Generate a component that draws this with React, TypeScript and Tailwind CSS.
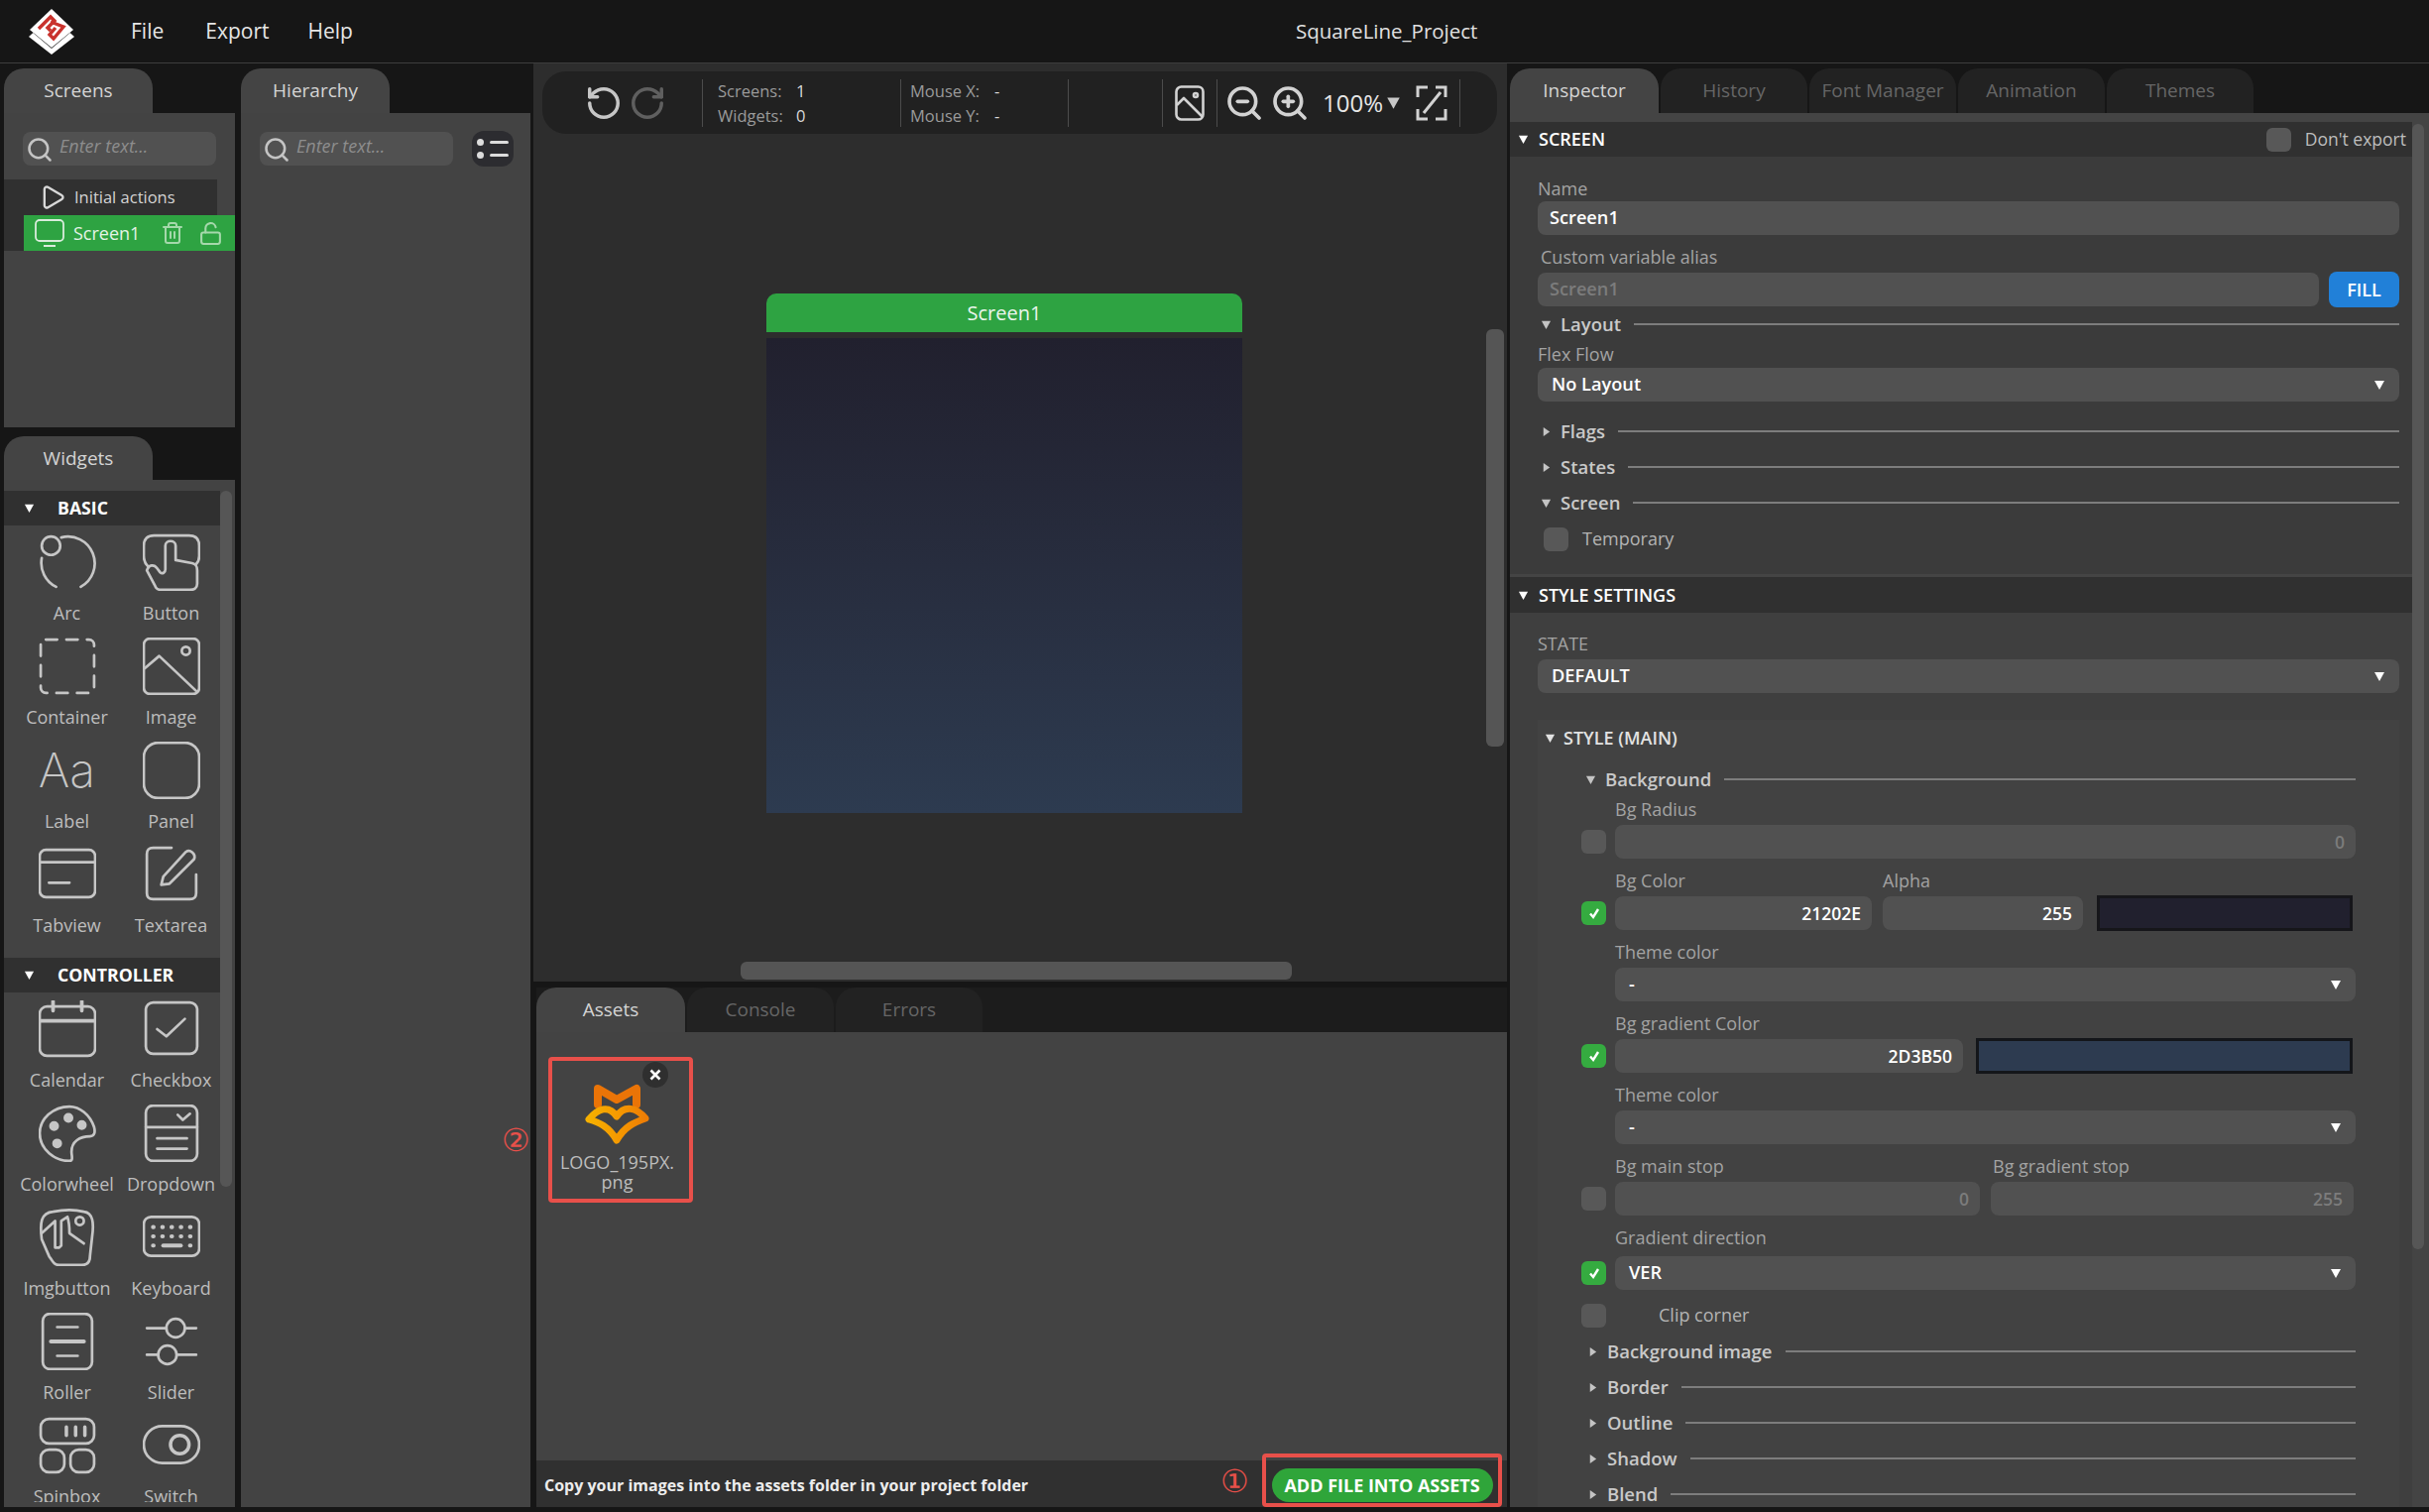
import type { ReactNode } from "react";
import { LockOpen, Play, RotateCcw, RotateCw, Search, Trash2, ZoomIn, ZoomOut } from "lucide-react";

const Caret = ({ right = false, className = "" }: { right?: boolean; className?: string }) => (
  <svg viewBox="0 0 12 12" className={`shrink-0 ${className}`} fill="currentColor">
    {right ? <path d="M3 1 L10 6 L3 11 Z" /> : <path d="M1 2 H11 L6 11 Z" />}
  </svg>
);

const Tab = ({ label, active = false }: { label: string; active?: boolean }) => (
  <div
    className={`flex h-full items-center justify-center rounded-t-[20px] text-[19px] ${
      active ? "w-[150px] bg-[#444444] text-[#d4d4d4]" : "w-[148px] bg-[#222222] text-[#666666]"
    }`}
  >
    {label}
  </div>
);

const SearchBox = () => (
  <div className="relative flex h-[34px] w-[195px] items-center rounded-lg bg-[#515151] pb-[6px] pl-[37px] text-[18px] italic text-[#8d8d8d]">
    <Search className="absolute left-[3px] top-[4px] size-[28px] text-[#c4c4c4]" strokeWidth={2.2} />
    Enter text...
  </div>
);

const Ico = ({ children }: { children: ReactNode }) => (
  <svg viewBox="0 0 56 56" className="size-[58px]" fill="none" stroke="#c6c6c6" strokeWidth="2.6" strokeLinecap="round" strokeLinejoin="round">
    {children}
  </svg>
);

const widgetsBasic: [string, ReactNode][] = [
  ["Arc", <Ico><circle cx="12" cy="12" r="9" /><path d="M22 4 A26 26 0 0 1 41 52 M3 24 A26 26 0 0 0 17 52" /></Ico>],
  ["Button", <Ico><path d="M5 32 C2 29 1 26 1 22 V12 C1 5 5 2 11 2 H45 C51 2 55 5 55 12 V22 C55 26 54 28 52 30" /><path d="M4 36 C6 30 11 30 14 34 L17 38 C19 40 22 38 22 35 V12 C22 6 32 6 32 12 V26 L48 29 C52 30 53 32 53 36 V49 C53 53 50 55 46 55 H18 C15 55 13 54 12 51 Z" /></Ico>],
  ["Container", <Ico><rect x="2" y="2" width="52" height="52" rx="5" strokeDasharray="11 9" /></Ico>],
  ["Image", <Ico><rect x="1" y="1" width="54" height="54" rx="6" /><circle cx="42" cy="13" r="4" /><path d="M2 30 L16 18 L52 52" /></Ico>],
  ["Label", <span className="flex h-[58px] items-center font-['Inter'] text-[48px] font-extralight leading-none text-[#c6c6c6]">Aa</span>],
  ["Panel", <Ico><rect x="1" y="1" width="54" height="54" rx="14" /></Ico>],
  ["Tabview", <Ico><rect x="1" y="4" width="54" height="46" rx="6" /><path d="M1 16 H55 M10 36 H30" /></Ico>],
  ["Textarea", <Ico><path d="M28 2 H10 C6 2 4 4 4 8 V46 C4 50 6 52 10 52 H46 C50 52 52 50 52 46 V28" /><path d="M18 38 L20 30 L42 6 C46 3 52 8 50 13 L26 37 Z" /></Ico>],
];

const widgetsController: [string, ReactNode][] = [
  ["Calendar", <Ico><rect x="1" y="6" width="54" height="48" rx="7" /><path d="M1 20 H55 M14 1 V10 M42 1 V10" strokeWidth="3.6" /></Ico>],
  ["Checkbox", <Ico><rect x="3" y="2" width="50" height="50" rx="7" /><path d="M14 28 L23 35 L41 18" /></Ico>],
  ["Colorwheel", <Ico><path d="M30 2 C14 2 1 14 1 28 C1 44 16 55 30 55 C34 55 32 50 32 46 C32 36 40 31 50 31 C55 31 55 26 54 22 C50 10 40 2 30 2 Z" /><circle cx="29" cy="13" r="3.5" fill="#c6c6c6" /><circle cx="15" cy="21" r="3.5" fill="#c6c6c6" /><circle cx="42" cy="20" r="3.5" fill="#c6c6c6" /><circle cx="18" cy="38" r="3.5" fill="#c6c6c6" /></Ico>],
  ["Dropdown", <Ico><rect x="3" y="1" width="50" height="54" rx="7" /><path d="M3 22 H53 M14 33 H43 M14 43 H43 M34 10 L39 15 L46 9" /></Ico>],
  ["Imgbutton", <Ico><path d="M3 30 C1 14 2 4 14 3 C24 1 36 1 44 3 C53 4 54 14 52 28 L50 46 C50 52 47 55 42 55 H20 C15 55 14 52 10 46 Z" /><path d="M3 24 L16 12 L16 38 L20 38 L22 36 V12 L28 8 C30 14 30 20 30 24 L44 34" /><circle cx="40" cy="12" r="4" /></Ico>],
  ["Keyboard", <Ico><rect x="1" y="8" width="54" height="38" rx="7" /><path d="M10 18 H10.5 M19 18 H19.5 M28 18 H28.5 M37 18 H37.5 M46 18 H46.5 M10 27 H10.5 M19 27 H19.5 M28 27 H28.5 M37 27 H37.5 M46 27 H46.5 M10 36 H10.5 M46 36 H46.5" strokeWidth="4" /><path d="M20 36 H37" strokeWidth="4" /></Ico>],
  ["Roller", <Ico><rect x="4" y="1" width="48" height="54" rx="7" /><path d="M18 14 H38 M18 42 H38" /><path d="M12 28 H44" strokeWidth="4" /></Ico>],
  ["Slider", <Ico><circle cx="32" cy="15" r="9" /><circle cx="24" cy="41" r="9" /><path d="M4 15 H23 M41 15 H52 M4 41 H15 M33 41 H52" /></Ico>],
  ["Spinbox", <Ico><rect x="2" y="2" width="52" height="24" rx="8" /><rect x="2" y="32" width="23" height="22" rx="8" /><rect x="31" y="32" width="23" height="22" rx="8" /><path d="M27 10 V18 M36 10 V18 M45 10 V18" strokeWidth="3.4" /></Ico>],
  ["Switch", <Ico><rect x="1" y="9" width="54" height="36" rx="18" /><circle cx="36" cy="27" r="9" strokeWidth="3.4" /></Ico>],
];

const WidgetGrid = ({ items }: { items: [string, ReactNode][] }) => (
  <div className="grid w-[218px] grid-cols-[105px_105px] pl-[11px] pt-[5px]">
    {items.map(([name, icon]) => (
      <div key={name} className="flex h-[105px] flex-col items-center justify-start pt-[3px] text-[18px] leading-[24px] text-[#bdbdbd]">
        {icon}
        <span className="mt-[10px] whitespace-nowrap">{name}</span>
      </div>
    ))}
  </div>
);

const GroupHead = ({ title, className = "" }: { title: string; className?: string }) => (
  <div className={`flex h-[35px] w-[218px] items-center bg-[#303030] pl-[20px] text-[17.7px] font-bold text-white ${className}`}>
    <Caret className="size-[11px]" />
    <span className="ml-[23px]">{title}</span>
  </div>
);

const Sep = ({ w, children }: { w: string; children?: ReactNode }) => (
  <div className={`flex h-[48px] shrink-0 items-center border-r border-[#4c4c4c] ${w}`}>{children}</div>
);

const Stat = ({ k, v, vx }: { k: string; v: string; vx: string }) => (
  <div className="flex h-[25px] items-center text-[16.5px] text-[#9a9a9a]">
    <span className={vx}>{k}</span>
    <span className="text-[#d8d8d8]">{v}</span>
  </div>
);

const Label = ({ text, className = "" }: { text: string; className?: string }) => (
  <div className={`h-[22px] whitespace-nowrap text-[18px] leading-[22px] text-[#a3a3a3] ${className}`}>{text}</div>
);

const Field = ({ value = "", muted = false, right = false, className = "" }: { value?: string; muted?: boolean; right?: boolean; className?: string }) => (
  <div
    className={`flex h-[34px] items-center rounded-lg bg-[#515151] font-semibold ${
      right ? "justify-end pl-[12px] pr-[11px] text-[17.5px]" : "px-[12px] text-[18.2px]"
    } ${muted ? "text-[#7c7c7c]" : "text-white"} ${className}`}
  >
    {value}
  </div>
);

const SelectBox = ({ value, className = "" }: { value: string; className?: string }) => (
  <div className={`flex h-[34px] items-center justify-between rounded-lg bg-[#515151] pl-[14px] pr-[14px] text-[18.2px] font-semibold text-white ${className}`}>
    {value}
    <Caret className="size-[12px]" />
  </div>
);

const Heading = ({ title, open = false, className = "" }: { title: string; open?: boolean; className?: string }) => (
  <div className={`flex h-[22px] items-center text-[18.5px] font-semibold text-[#c9c9c9] ${className}`}>
    <Caret right={!open} className="size-[11px] text-[#c4c4c4]" />
    <span className="ml-[9px] mr-[13px] whitespace-nowrap">{title}</span>
    <div className="h-[2px] flex-1 bg-[#7d7d7d]" />
  </div>
);

const Check = ({ on = false }: { on?: boolean }) => (
  <div className={`flex h-[24px] w-[25px] shrink-0 items-center justify-center rounded-md ${on ? "bg-[#35ab40]" : "bg-[#585858]"}`}>
    {on && (
      <svg viewBox="0 0 16 16" className="size-[16px]" fill="none" stroke="white" strokeWidth="2.4">
        <path d="M4 8.5 L7 12 L12 4" />
      </svg>
    )}
  </div>
);

const SectionBar = ({ title, children, className = "" }: { title: string; children?: ReactNode; className?: string }) => (
  <div className={`mr-[17px] flex shrink-0 items-center bg-[#303030] pl-[8px] pr-[6px] text-[18px] font-semibold text-white ${className}`}>
    <Caret className="size-[11px]" />
    <span className="ml-[10px]">{title}</span>
    {children}
  </div>
);

const FoxLogo = () => (
  <svg viewBox="0 0 65 62" className="h-[62px] w-[65px] shrink-0" fill="none" strokeLinecap="round" strokeLinejoin="round">
    <defs>
      <linearGradient id="fox" x1="0" y1="0" x2="1" y2="0">
        <stop offset="0" stopColor="#f6b000" />
        <stop offset="0.5" stopColor="#f59a00" />
        <stop offset="1" stopColor="#ee7d05" />
      </linearGradient>
    </defs>
    <path d="M13 21 V5 L32 16 L52 5 V21" stroke="#ea7407" strokeWidth="8" />
    <path d="M32 33 C24 21 13 25 4 36 C14 39 24 43 32 57 C40 43 50 39 61 35 C52 24 40 21 32 33 Z" stroke="url(#fox)" strokeWidth="7" />
  </svg>
);

const AppLogo = () => (
  <svg viewBox="0 0 48 48" className="size-[48px]">
    <path d="M24 8 L47 29 L24 47 L1 29 Z" fill="white" />
    <path d="M24 5 L44 24 L24 41 L4 24 Z" fill="#2a2a2a" />
    <path d="M24 1 L46 22 L24 40 L2 22 Z" fill="white" />
    <path d="M11 21 L23 9 L27 13 L20 20 L23 23 M23 14 L36 19 L26 31 L22 27 L28 20" fill="none" stroke="#c9322d" strokeWidth="3.4" />
  </svg>
);

const App = () => {
  return (
    <div className="flex h-[1525px] w-[2450px] flex-col overflow-hidden bg-[#161616] font-['Open_Sans','Noto_Sans',sans-serif]">
      <header className="relative flex h-[64px] shrink-0 items-center border-b border-[#3d3d3d] bg-[#161616] text-[21px] text-[#e6e6e6]">
        <div className="ml-[28px] w-[104px]">
          <AppLogo />
        </div>
        <span>File</span>
        <span className="ml-[42px]">Export</span>
        <span className="ml-[39px]">Help</span>
        <span className="absolute left-[1307px] top-[16px] text-[20.5px] text-[#e0e0e0]">SquareLine_Project</span>
      </header>

      <div className="flex min-h-0 flex-1 pb-[5px]">
        {/* left column */}
        <div className="ml-[4px] flex w-[233px] shrink-0 flex-col pt-[5px]">
          <div className="h-[45px]">
            <Tab label="Screens" active />
          </div>
          <div className="h-[317px] bg-[#434343] pt-[19px]">
            <div className="ml-[19px]">
              <SearchBox />
            </div>
            <div className="mt-[14px] flex h-[36px] w-[215px] items-center bg-[#303030] pl-[35px] text-[16.5px] text-[#d4d4d4]">
              <Play className="size-[28px] text-[#d8d8d8]" strokeWidth={2} />
              <span className="ml-[8px]">Initial actions</span>
            </div>
            <div className="flex h-[36px]">
              <div className="w-[20px] bg-[#303030]" />
              <div className="flex flex-1 items-center bg-[#2ea342] pl-[11px] text-[18px] text-[#e4f3e6]">
                <svg viewBox="0 0 30 30" className="size-[30px]" fill="none" stroke="#d9ecdc" strokeWidth="1.8">
                  <rect x="1" y="2" width="28" height="21" rx="4" />
                  <path d="M9 28 H21" strokeWidth="2" />
                </svg>
                <span className="ml-[9px]">Screen1</span>
                <Trash2 className="ml-[21px] size-[24px] text-[#a5d8ab]" strokeWidth={2} />
                <LockOpen className="ml-[14px] size-[25px] text-[#a5d8ab]" strokeWidth={2} />
              </div>
            </div>
          </div>
          <div className="mt-[9px] h-[44px]">
            <Tab label="Widgets" active />
          </div>
          <div className="relative min-h-0 flex-1 overflow-hidden bg-[#434343] pt-[11px]">
            <div className="h-[1020px] overflow-hidden">
              <GroupHead title="BASIC" />
              <WidgetGrid items={widgetsBasic} />
              <GroupHead title="CONTROLLER" className="mt-[11px]" />
              <WidgetGrid items={widgetsController} />
            </div>
            <div className="absolute left-[218px] top-[11px] h-[702px] w-[12px] rounded-md bg-[#565656]" />
          </div>
        </div>

        {/* hierarchy */}
        <div className="ml-[6px] flex w-[292px] shrink-0 flex-col pt-[5px]">
          <div className="h-[45px]">
            <Tab label="Hierarchy" active />
          </div>
          <div className="flex flex-1 items-start bg-[#434343] pl-[19px] pt-[19px]">
            <SearchBox />
            <div className="ml-[19px] mt-[-1px] flex h-[36px] w-[42px] flex-col items-center justify-center gap-[6px] rounded-xl bg-[#2c2c30]">
              <div className="flex items-center gap-[6px]">
                <span className="size-[7px] rounded-full bg-[#dcdcdc]" />
                <span className="h-[3px] w-[19px] rounded bg-[#dcdcdc]" />
              </div>
              <div className="flex items-center gap-[6px]">
                <span className="size-[7px] rounded-full bg-[#dcdcdc]" />
                <span className="h-[3px] w-[19px] rounded bg-[#dcdcdc]" />
              </div>
            </div>
          </div>
        </div>

        {/* center */}
        <div className="relative ml-[3px] flex w-[982px] shrink-0 flex-col">
          <div className="relative h-[926px] bg-[#2d2d2d] pl-[9px] pr-[10px] pt-[8px]">
            <div className="flex h-[63px] items-center rounded-[24px] bg-[#212121] text-[#c8c8c8]">
              <Sep w="w-[162px] pl-[43px] gap-[6px]">
                <RotateCcw className="size-[38px] text-[#c6c6c6]" strokeWidth={2.2} />
                <RotateCw className="size-[38px] text-[#5f5f5f]" strokeWidth={2.2} />
              </Sep>
              <Sep w="w-[200px] pl-[15px]">
                <div className="mt-[3px] flex flex-col">
                  <Stat k="Screens:" v="1" vx="w-[79px]" />
                  <Stat k="Widgets:" v="0" vx="w-[79px]" />
                </div>
              </Sep>
              <Sep w="w-[169px] pl-[9px]">
                <div className="mt-[3px] flex flex-col">
                  <Stat k="Mouse X:" v="-" vx="w-[85px]" />
                  <Stat k="Mouse Y:" v="-" vx="w-[85px]" />
                </div>
              </Sep>
              <Sep w="w-[95px]" />
              <Sep w="w-[55px] pl-[12px]">
                <svg viewBox="0 0 30 36" className="h-[36px] w-[30px]" fill="none" stroke="#d2d2d2" strokeWidth="2.6" strokeLinejoin="round">
                  <rect x="1.5" y="1.5" width="27" height="33" rx="5" />
                  <circle cx="21" cy="10" r="2" />
                  <path d="M2 20 L9 13 L28 32" />
                </svg>
              </Sep>
              <Sep w="w-[245px] pl-[7px]">
                <ZoomOut className="size-[40px] text-[#d2d2d2]" strokeWidth={2.2} />
                <ZoomIn className="ml-[6px] size-[40px] text-[#d2d2d2]" strokeWidth={2.2} />
                <span className="ml-[13px] text-[24px] text-[#e6e6e6]">100%</span>
                <Caret className="ml-[3px] size-[15px] text-[#c8c8c8]" />
                <svg viewBox="0 0 32 36" className="ml-[15px] h-[36px] w-[32px]" fill="none" stroke="#d2d2d2" strokeWidth="3">
                  <path d="M12 2 H2 V12 M20 34 H30 V24 M2 24 V34 H12 M20 2 H30 V12 M8 28 L25 7" />
                </svg>
              </Sep>
            </div>
            <div className="ml-[226px] mt-[161px] w-[480px]">
              <div className="flex h-[39px] items-center justify-center rounded-t-[10px] bg-[#2ea342] text-[20px] text-[#eaf6ec]">Screen1</div>
              <div className="mt-[6px] h-[479px] bg-gradient-to-b from-[#21202e] to-[#2d3b50]" />
            </div>
            <div className="absolute left-[961px] top-[268px] h-[421px] w-[18px] rounded-md bg-[#555555]" />
            <div className="absolute bottom-[2px] left-[209px] h-[18px] w-[556px] rounded-md bg-[#555555]" />
          </div>

          <div className="ml-[3px] mt-[6px] flex h-[45px] shrink-0 gap-[2px] bg-[#1c1c1c]">
            <Tab label="Assets" active />
            <Tab label="Console" />
            <Tab label="Errors" />
          </div>
          <div className="ml-[3px] min-h-0 flex-1 bg-[#434343] pl-[12px] pt-[25px]">
            <div className="relative flex h-[147px] w-[146px] flex-col items-center rounded-[4px] border-[4px] border-[#e8504a] pr-[7px] pt-[23px] text-center text-[18px] leading-[20px] text-[#bdbdbd]">
              <FoxLogo />
              <span className="mt-[7px] w-[130px] shrink-0 text-center">LOGO_195PX.</span>
              <span className="shrink-0">png</span>
              <div className="absolute left-[91px] top-[1px] flex size-[26px] items-center justify-center rounded-full bg-[#2f2f2f]">
                <svg viewBox="0 0 12 12" className="size-[12px]" stroke="white" strokeWidth="2.6">
                  <path d="M1.5 1.5 L10.5 10.5 M10.5 1.5 L1.5 10.5" />
                </svg>
              </div>
            </div>
          </div>
          <div className="ml-[3px] flex h-[47px] shrink-0 items-center bg-[#303030] pl-[8px] pt-[2px] text-[16px] font-bold text-[#ececec]">
            Copy your images into the assets folder in your project folder
          </div>
          <span className="absolute left-[-32px] top-[1069px] text-[32px] leading-[32px] text-[#e8504a]">②</span>
          <span className="absolute left-[693px] top-[1413px] text-[32px] leading-[32px] text-[#e8504a]">①</span>
          <div className="absolute left-[735px] top-[1402px] flex h-[54px] w-[242px] items-end justify-center rounded-[4px] border-[4px] border-[#e8504a] pb-[1px]">
            <div className="flex h-[34px] w-[223px] items-center justify-center rounded-full bg-[#2fa53a] text-[18px] font-bold text-white">ADD FILE INTO ASSETS</div>
          </div>
        </div>

        {/* inspector */}
        <div className="relative ml-[3px] flex min-w-0 flex-1 flex-col pt-[5px]">
          <div className="flex h-[45px] shrink-0 gap-[2px] bg-[#161616]">
            <Tab label="Inspector" active />
            <Tab label="History" />
            <Tab label="Font Manager" />
            <Tab label="Animation" />
            <Tab label="Themes" />
          </div>
          <div className="flex min-h-0 flex-1 flex-col overflow-hidden bg-[#444444] pt-[9px]">
            <SectionBar title="SCREEN" className="h-[35px]">
              <div className="ml-auto flex items-center text-[17.5px] font-normal text-[#bdbdbd]">
                <Check />
                <span className="ml-[14px]">Don't export</span>
              </div>
            </SectionBar>
            <div className="mr-[17px] h-[421px] shrink-0 bg-[#3b3b3b] pl-[28px]">
              <div className="w-[869px]">
                <Label text="Name" className="mt-[21px]" />
                <Field value="Screen1" className="mt-[2px]" />
                <Label text="Custom variable alias" className="ml-[3px] mt-[11px]" />
                <div className="mt-[5px] flex gap-[10px]">
                  <Field value="Screen1" muted className="flex-1" />
                  <div className="mt-[-1px] flex h-[36px] w-[71px] items-center justify-center rounded-lg bg-[#2180d8] text-[18px] font-semibold text-white">FILL</div>
                </div>
                <Heading title="Layout" open className="ml-[3px] mt-[6px]" />
                <Label text="Flex Flow" className="mt-[8px]" />
                <SelectBox value="No Layout" className="mt-[3px]" />
                <Heading title="Flags" className="ml-[3px] mt-[19px]" />
                <Heading title="States" className="ml-[3px] mt-[14px]" />
                <Heading title="Screen" open className="ml-[3px] mt-[14px]" />
                <div className="ml-[6px] mt-[12px] flex items-center">
                  <Check />
                  <span className="ml-[14px] text-[18px] text-[#b4b4b4]">Temporary</span>
                </div>
              </div>
            </div>
            <SectionBar title="STYLE SETTINGS" className="mt-[3px] h-[36px]" />
            <div className="mr-[17px] min-h-0 flex-1 bg-[#3f3f3f] pl-[28px]">
              <div className="w-[869px]">
                <Label text="STATE" className="mt-[20px]" />
                <SelectBox value="DEFAULT" className="mt-[5px]" />
                <div className="mt-[27px] h-[800px] bg-[#424242] pt-[7px]">
                  <div className="flex h-[22px] items-center pl-[7px] text-[18px] font-semibold text-[#e2e2e2]">
                    <Caret className="size-[11px]" />
                    <span className="ml-[8px]">STYLE (MAIN)</span>
                  </div>
                  <div className="ml-[44px] mr-[44px]">
                    <Heading title="Background" open className="ml-[4px] mt-[20px]" />
                    <Label text="Bg Radius" className="ml-[34px] mt-[8px]" />
                    <div className="mt-[5px] flex items-center gap-[9px]">
                      <Check />
                      <Field value="0" muted right className="flex-1" />
                    </div>
                    <div className="ml-[34px] mt-[11px] flex">
                      <Label text="Bg Color" className="w-[270px]" />
                      <Label text="Alpha" />
                    </div>
                    <div className="mt-[5px] flex items-center gap-[9px]">
                      <Check on />
                      <Field value="21202E" right className="w-[259px]" />
                      <Field value="255" right className="ml-[2px] w-[202px]" />
                      <div className="my-[-1px] ml-[5px] h-[36px] w-[258px] border-[3px] border-[#16161a] bg-[#21202e]" />
                    </div>
                    <Label text="Theme color" className="ml-[34px] mt-[11px]" />
                    <div className="ml-[34px] mt-[5px]">
                      <SelectBox value="-" />
                    </div>
                    <Label text="Bg gradient Color" className="ml-[34px] mt-[11px]" />
                    <div className="mt-[5px] flex items-center gap-[9px]">
                      <Check on />
                      <Field value="2D3B50" right className="w-[351px]" />
                      <div className="my-[-1px] ml-[4px] h-[36px] w-[380px] border-[3px] border-[#14161a] bg-[#2d3b50]" />
                    </div>
                    <Label text="Theme color" className="ml-[34px] mt-[11px]" />
                    <div className="ml-[34px] mt-[5px]">
                      <SelectBox value="-" />
                    </div>
                    <div className="ml-[34px] mt-[11px] flex">
                      <Label text="Bg main stop" className="w-[381px]" />
                      <Label text="Bg gradient stop" />
                    </div>
                    <div className="mt-[5px] flex items-center gap-[9px]">
                      <Check />
                      <Field value="0" muted right className="w-[368px]" />
                      <Field value="255" muted right className="ml-[2px] w-[366px]" />
                    </div>
                    <Label text="Gradient direction" className="ml-[34px] mt-[11px]" />
                    <div className="mt-[8px] flex items-center gap-[9px]">
                      <Check on />
                      <SelectBox value="VER" className="flex-1" />
                    </div>
                    <div className="mt-[12px] flex items-center">
                      <Check />
                      <span className="ml-[53px] text-[18px] text-[#b4b4b4]">Clip corner</span>
                    </div>
                    <Heading title="Background image" className="ml-[6px] mt-[12px]" />
                    <Heading title="Border" className="ml-[6px] mt-[14px]" />
                    <Heading title="Outline" className="ml-[6px] mt-[14px]" />
                    <Heading title="Shadow" className="ml-[6px] mt-[14px]" />
                    <Heading title="Blend" className="ml-[6px] mt-[14px]" />
                  </div>
                </div>
              </div>
            </div>
          </div>
          <div className="absolute left-[910px] top-[61px] h-[1135px] w-[12px] rounded-md bg-[#565656]" />
        </div>
      </div>
    </div>
  );
};

export default App;
